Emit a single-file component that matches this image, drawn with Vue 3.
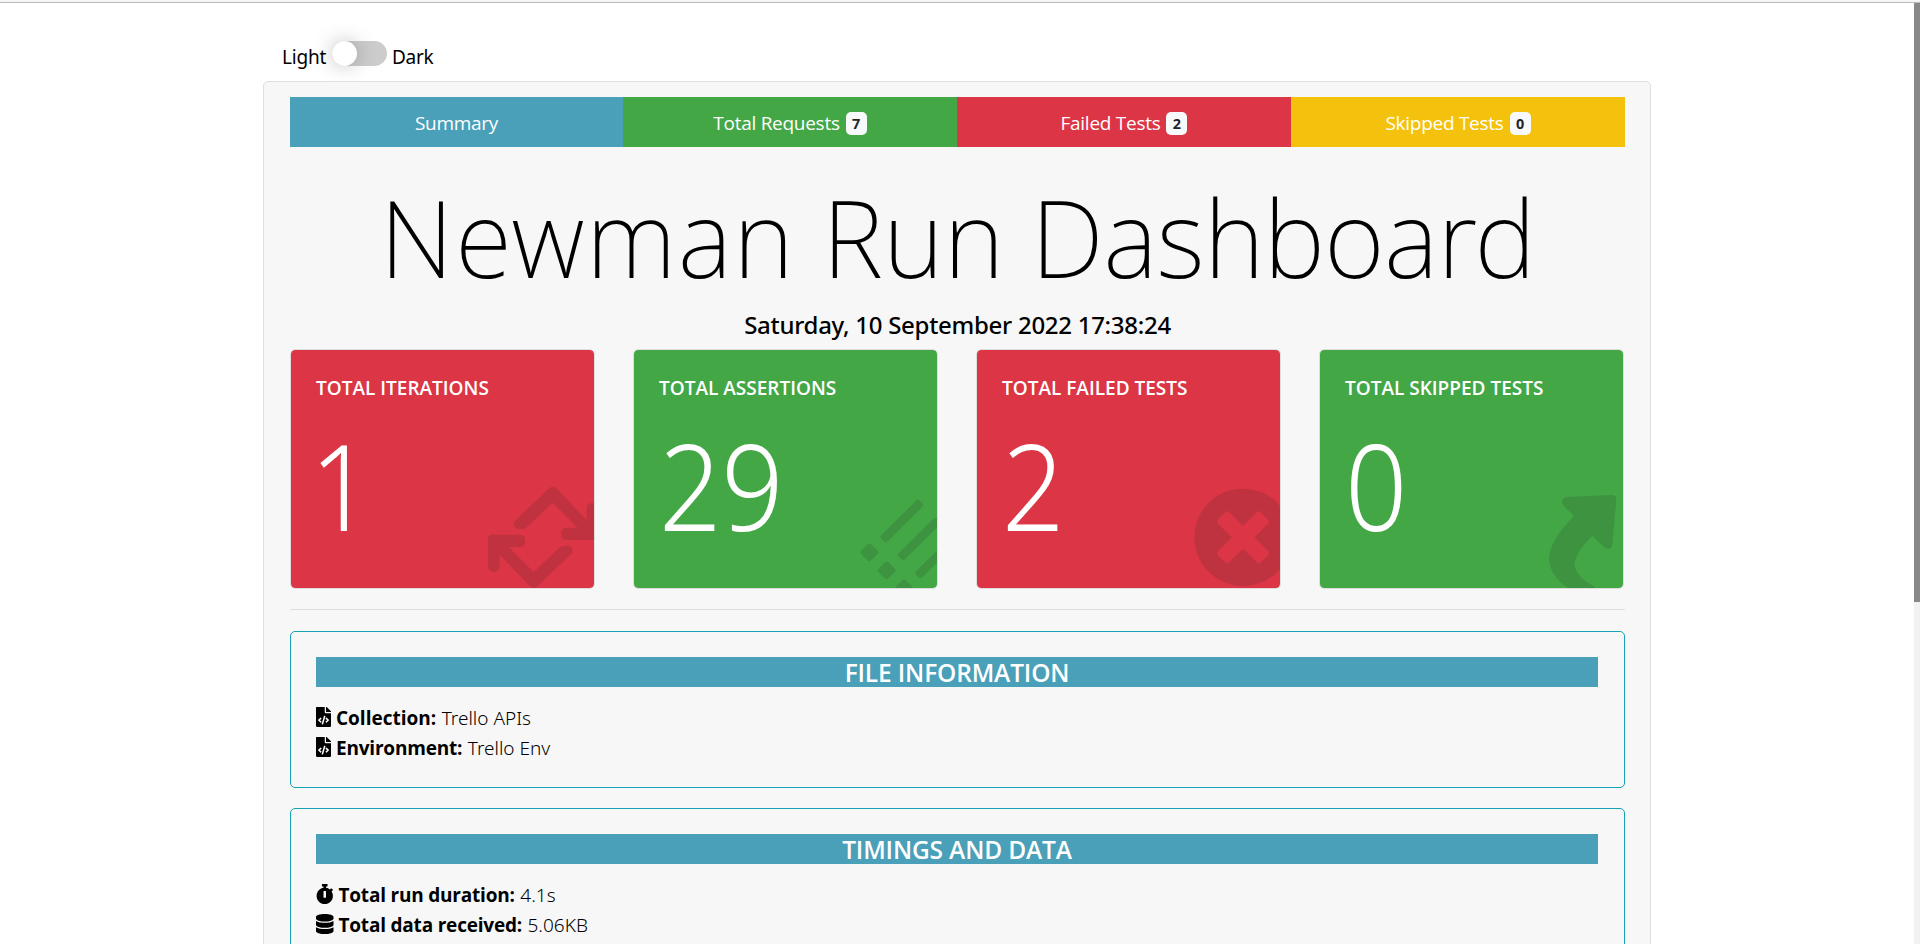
<script setup>
const tabs = [
  { label: 'Summary', tone: 'cyan' },
  { label: 'Total Requests', count: 7, tone: 'green' },
  { label: 'Failed Tests', count: 2, tone: 'red' },
  { label: 'Skipped Tests', count: 0, tone: 'yellow' }
]
const cards = [
  { title: 'TOTAL ITERATIONS', value: 1, tone: 'red', icon: 'retweet', box: '33 30 909 714' },
  { title: 'TOTAL ASSERTIONS', value: 29, tone: 'green', icon: 'tasks', box: '42 30 909 714' },
  { title: 'TOTAL FAILED TESTS', value: 2, tone: 'red', icon: 'times', box: '51 30 909 714' },
  { title: 'TOTAL SKIPPED TESTS', value: 0, tone: 'green', icon: 'share', box: '60 30 909 714' }
]
const icons = {
  file: {
    w: 384,
    d: 'M384 121.941V128H256V0h6.059c6.365 0 12.47 2.529 16.971 7.029l97.941 97.941A24.005 24.005 0 0 1 384 121.941zM248 160c-13.2 0-24-10.8-24-24V0H24C10.745 0 0 10.745 0 24v464c0 13.255 10.745 24 24 24h336c13.255 0 24-10.745 24-24V160H248zM123.206 400.505a5.4 5.4 0 0 1-7.633.246l-64.866-60.812a5.4 5.4 0 0 1 0-7.879l64.866-60.812a5.4 5.4 0 0 1 7.633.246l19.579 20.885a5.4 5.4 0 0 1-.372 7.747L101.65 336l40.763 35.874a5.4 5.4 0 0 1 .372 7.747l-19.579 20.884zm51.295 50.479l-27.453-7.97a5.402 5.402 0 0 1-3.681-6.692l61.44-211.626a5.402 5.402 0 0 1 6.692-3.681l27.452 7.97a5.4 5.4 0 0 1 3.68 6.692l-61.44 211.626a5.397 5.397 0 0 1-6.69 3.681zm160.792-111.045l-64.866 60.812a5.4 5.4 0 0 1-7.633-.246l-19.58-20.885a5.4 5.4 0 0 1 .372-7.747L284.35 336l-40.763-35.874a5.4 5.4 0 0 1-.372-7.747l19.58-20.885a5.4 5.4 0 0 1 7.633-.246l64.866 60.812a5.4 5.4 0 0 1-.001 7.879z'
  },
  watch: {
    w: 448,
    d: 'M432 304c0 114.9-93.1 208-208 208S16 418.9 16 304c0-104 76.3-190.2 176-205.5V64h-28c-6.6 0-12-5.4-12-12V12c0-6.6 5.4-12 12-12h120c6.6 0 12 5.4 12 12v40c0 6.6-5.4 12-12 12h-28v34.5c37.5 5.8 71.7 21.6 99.7 44.6l27.5-27.5c4.7-4.7 12.3-4.7 17 0l28.3 28.3c4.7 4.7 4.7 12.3 0 17l-29.4 29.4-.6.6C419.7 223.3 432 262.2 432 304zm-176 36V188.5c0-6.6-5.4-12-12-12h-40c-6.6 0-12 5.4-12 12V340c0 6.6 5.4 12 12 12h40c6.6 0 12-5.4 12-12z'
  },
  database: {
    w: 448,
    d: 'M448 73.143v45.714C448 159.143 347.667 192 224 192S0 159.143 0 118.857V73.143C0 32.857 100.333 0 224 0s224 32.857 224 73.143zM448 176v102.857C448 319.143 347.667 352 224 352S0 319.143 0 278.857V176c48.125 33.143 136.208 48.572 224 48.572S399.874 209.143 448 176zm0 160v102.857C448 479.143 347.667 512 224 512S0 479.143 0 438.857V336c48.125 33.143 136.208 48.572 224 48.572S399.874 369.143 448 336z'
  }
}
const panels = [
  {
    title: 'FILE INFORMATION',
    rows: [
      { icon: icons.file, label: 'Collection:', value: 'Trello APIs', loose: true },
      { icon: icons.file, label: 'Environment:', value: 'Trello Env', loose: false }
    ]
  },
  {
    title: 'TIMINGS AND DATA',
    rows: [
      { icon: icons.watch, label: 'Total run duration:', value: '4.1s' },
      { icon: icons.database, label: 'Total data received:', value: '5.06KB' }
    ]
  }
]
</script>

<template>
  <div class="page">
    <div class="strip"></div>
    <div class="body">
      <main class="content">
        <div class="theme">
          <span class="light">Light</span>
          <span class="switch"><span class="knob"></span></span>
          <span class="dark">Dark</span>
        </div>
        <section class="board">
          <nav class="tabs">
            <a v-for="t in tabs" :key="t.label" class="tab" :class="t.tone">
              <span>{{ t.label }}</span>
              <span v-if="t.count !== undefined" class="badge">{{ t.count }}</span>
            </a>
          </nav>
          <h1><span class="wide">Newman</span> Run <span class="tight">Dashboard</span></h1>
          <h5>Saturday, 10 September 2022 17:38:24</h5>
          <div class="cards">
            <div v-for="c in cards" :key="c.title" class="card" :class="c.tone">
              <svg class="mark" :viewBox="c.box" preserveAspectRatio="none">
                <template v-if="c.icon === 'retweet'">
                  <path id="half" d="M706 542L806 446Q818 434 830 446L920 540V507Q920 489 937 489Q955 489 955 507V588Q955 600 943 600H861Q843 600 843 581Q843 563 861 563H893L818 488L742 560Q735 567 726 567H716Q702 567 702 552Q702 546 706 542Z" />
                  <use href="#half" transform="rotate(180 789.5 592)" />
                </template>
                <template v-else-if="c.icon === 'tasks'">
                  <g v-for="n in 3" :key="n" :transform="`translate(${(n - 1) * 52} ${(n - 1) * 54})`">
                    <rect x="764.5" y="530" width="162" height="26" rx="7" transform="rotate(-44.7 845.5 543)" />
                    <rect x="727" y="616" width="42" height="42" rx="8" transform="rotate(-44.7 748 637)" />
                  </g>
                </template>
                <template v-else-if="c.icon === 'times'">
                  <mask id="cross">
                    <rect x="690" y="430" width="320" height="320" fill="#fff" />
                    <rect x="758" y="568" width="182" height="48" rx="9" fill="#000" transform="rotate(45 849 592)" />
                    <rect x="758" y="568" width="182" height="48" rx="9" fill="#000" transform="rotate(-45 849 592)" />
                  </mask>
                  <circle cx="849" cy="592" r="146" mask="url(#cross)" />
                </template>
                <path v-else d="M798 471L936 465Q949 465 949 478L937 614Q932 632 915 624L877 587Q825 640 823 672Q826 710 885 741V744H803Q747 705 747 655Q750 600 822 528L790 496Q780 480 798 471Z" />
              </svg>
              <h6>{{ c.title }}</h6>
              <div class="value" :class="{ one: c.value === 1 }">{{ c.value }}</div>
            </div>
          </div>
          <hr />
          <div v-for="p in panels" :key="p.title" class="panel">
            <h4>{{ p.title }}</h4>
            <div v-for="r in p.rows" :key="r.label" class="row" :class="{ loose: r.loose }">
              <svg class="icon" :viewBox="`0 0 ${r.icon.w} 512`"><path :d="r.icon.d" /></svg>
              <strong>{{ r.label }}</strong>
              <span>{{ r.value }}</span>
            </div>
          </div>
        </section>
      </main>
      <div class="scroll"><div class="thumb"></div></div>
    </div>
  </div>
</template>

<style>
body { overflow: hidden; }
</style>

<style scoped>
* { box-sizing: border-box; }
h1, h4, h5, h6 { margin: 0; }
.page {
  height: 944px;
  overflow: hidden;
  background: #fff;
  color: #000;
  font-family: "Open Sans", sans-serif;
  font-size: 19px;
}
.strip { height: 3px; background: #f5f5f5; border-bottom: 1px solid #bbb; }
.body { display: flex; height: 941px; }
.content { flex: 1; padding-top: 38px; display: flex; flex-direction: column; align-items: center; }
.scroll { width: 6px; background: #f1f1f1; }
.thumb { height: 599px; background: #888; }
.theme { width: 1388px; height: 40px; flex: none; display: flex; padding-left: 19px; line-height: 33px; font-family: "Noto Sans", sans-serif; font-weight: 400; letter-spacing: -.2px; }
.light { width: 50px; }
.switch { width: 55px; height: 25px; border-radius: 13px; background: #ccc; }
.knob { display: block; width: 25px; height: 25px; border-radius: 50%; background: #fff; box-shadow: 0 0 20px rgba(0, 0, 0, .25); }
.dark { margin-left: 5px; letter-spacing: -.3px; }
.board {
  width: 1388px;
  height: 1400px;
  flex: none;
  border: 1px solid #dfdfdf;
  border-radius: 5px;
  background: #f7f7f7;
  padding: 15px 25px 0 26px;
}
.cyan { background-color: #49a0b8; }
.green { background-color: #43a746; }
.red { background-color: #dc3545; }
.yellow { background-color: #f4c20d; }
.tabs { display: grid; grid-template-columns: 333px 334px 334px 334px; height: 50px; }
.tab { display: flex; align-items: center; justify-content: center; gap: 6px; padding: 2px 0 0 0; color: #fff; letter-spacing: -.27px; }
.badge {
  width: 21px;
  height: 23px;
  margin-top: 1px;
  border-radius: 5px;
  background: #f8f9fa;
  color: #212529;
  font-size: 14.4px;
  font-weight: 700;
  line-height: 23px;
  text-align: center;
  letter-spacing: 0;
}
h1 {
  margin-top: 25px;
  height: 130px;
  font: 200 107px/130px "Noto Sans", sans-serif;
  text-align: center;
  white-space: nowrap;
  transform: scaleX(.971);
}
.wide { letter-spacing: 1.5px; }
.tight { letter-spacing: -.7px; }
h5 { margin: 5px 0 6px; font: 500 24px/36px "Noto Sans", sans-serif; text-align: center; letter-spacing: -.28px; }
.cards { display: grid; grid-template-columns: repeat(4, 305px); column-gap: 38px; }
.card {
  position: relative;
  height: 240px;
  border: 1px solid #dedede;
  border-radius: 5px;
  background-clip: padding-box;
  overflow: hidden;
  padding: 24px 25px;
  color: #fff;
}
.mark { position: absolute; inset: 0; width: 100%; height: 100%; fill: #212529; opacity: .15; }
h6 { font-size: 19px; line-height: 28px; font-weight: 600; white-space: nowrap; }
.value {
  margin-top: 13px;
  font: 300 120px/140px "Noto Sans", sans-serif;
  transform: scaleX(.91);
  transform-origin: 0 50%;
}
.value.one { margin-left: -6px; }
hr { margin: 20px 0 21px; border: 0; height: 1px; background: #dedede; }
.panel { height: 157px; border: 1px solid #17a2b8; border-radius: 5px; padding: 25px 26px 0 25px; margin-bottom: 20px; }
.panel:last-child { height: 187px; }
h4 {
  height: 30px;
  margin-bottom: 16px;
  background: #49a0b8;
  color: #fff;
  font-size: 24.5px;
  line-height: 32px;
  font-weight: 600;
  text-align: center;
  letter-spacing: -.15px;
}
.row { display: flex; line-height: 30px; height: 30px; }
.icon { height: 20px; margin: 4px 5px 0 0; }
.row strong { letter-spacing: -.2px; margin-right: 5.5px; }
.row.loose strong { letter-spacing: 0; }
.row span { font-family: "Noto Sans", sans-serif; font-weight: 300; }
</style>
